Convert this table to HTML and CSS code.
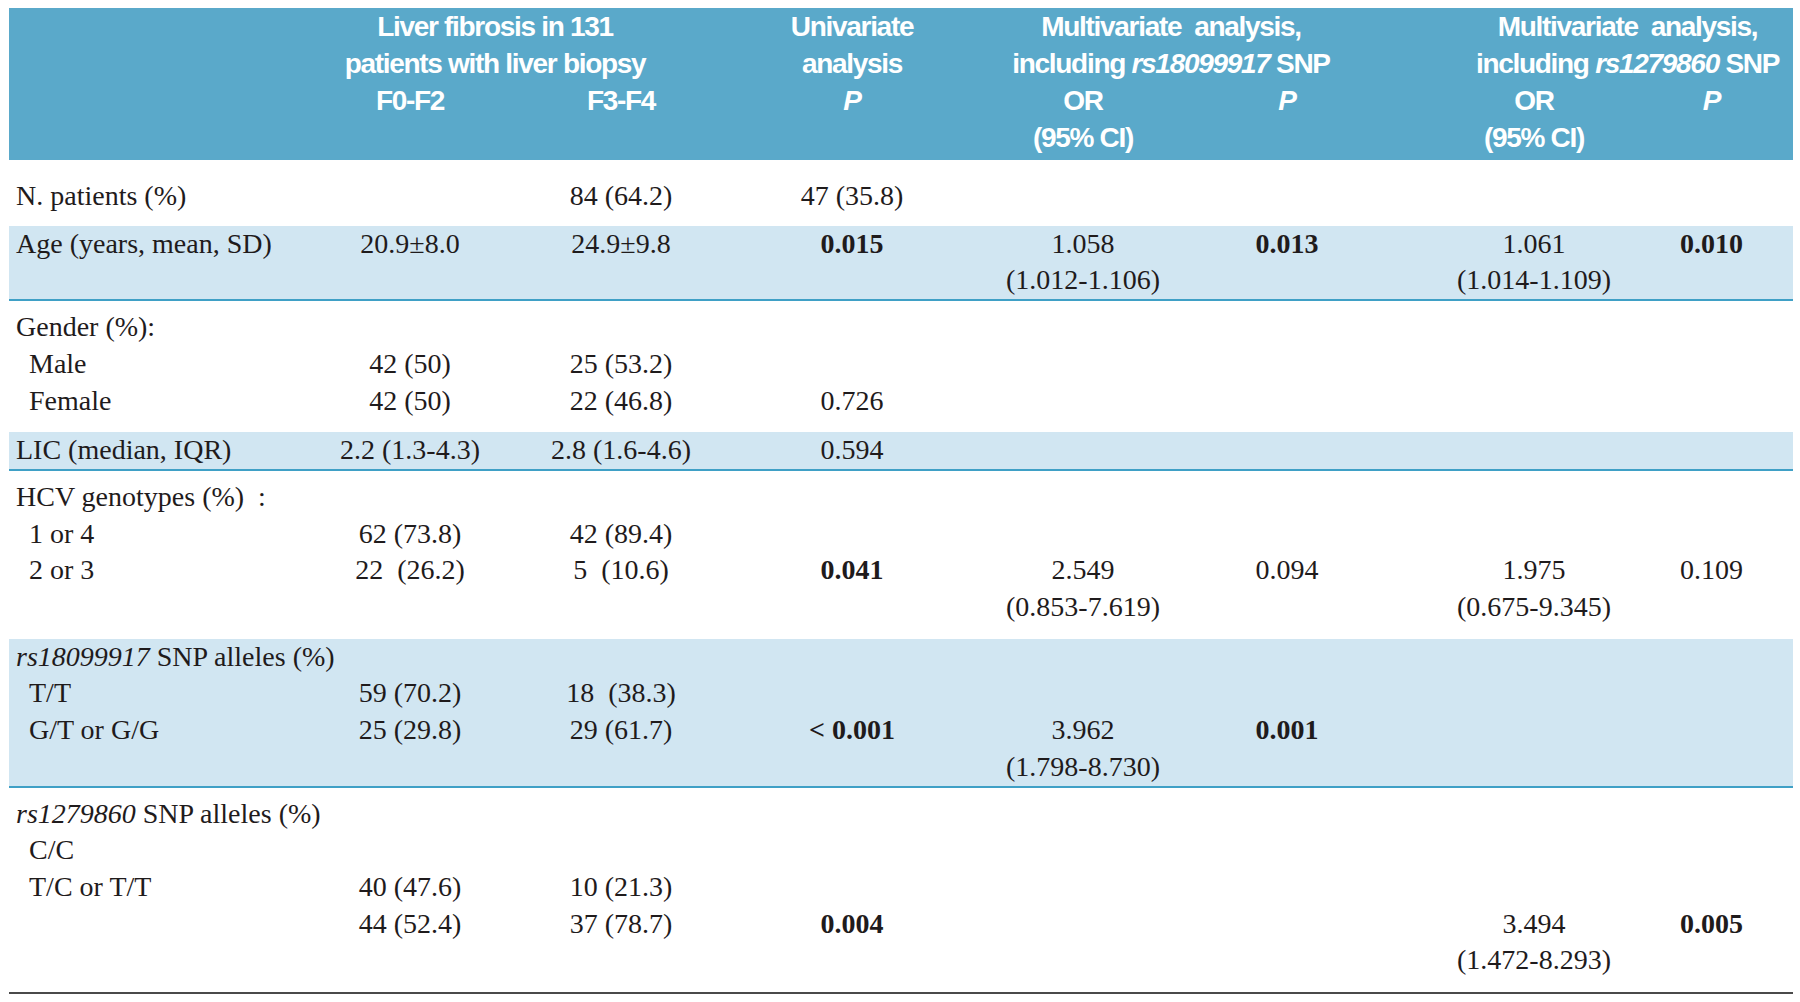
FILE: index.html
```html
<!DOCTYPE html>
<html>
<head>
<meta charset="utf-8">
<link rel="stylesheet" href="styles.css">
</head>
<body>
<div class="tbl">
  <div class="grid head">
    <div class="h g1">Liver fibrosis in 131<br>patients with liver biopsy</div>
    <div class="h univ">Univariate<br>analysis</div>
    <div class="h m1">Multivariate&nbsp; analysis,<br>including <i>rs18099917</i> SNP</div>
    <div class="h m2">Multivariate&nbsp; analysis,<br>including <i>rs1279860</i> SNP</div>
    <div class="h s c2">F0-F2</div>
    <div class="h s c3">F3-F4</div>
    <div class="h s c4"><i>P</i></div>
    <div class="h s c5">OR<br>(95% CI)</div>
    <div class="h s c6"><i>P</i></div>
    <div class="h s c7">OR<br>(95% CI)</div>
    <div class="h s c8"><i>P</i></div>
  </div>

  <div class="grid row first">
    <div class="cell lab">N. patients (%)</div>
    <div class="cell"></div>
    <div class="cell">84 (64.2)</div>
    <div class="cell">47 (35.8)</div>
    <div class="cell"></div>
    <div class="cell"></div>
    <div class="cell"></div>
    <div class="cell last"></div>
  </div>

  <div class="grid row band">
    <div class="cell lab">Age (years, mean, SD)</div>
    <div class="cell">20.9±8.0</div>
    <div class="cell">24.9±9.8</div>
    <div class="cell"><b>0.015</b></div>
    <div class="cell">1.058<br>(1.012-1.106)</div>
    <div class="cell"><b>0.013</b></div>
    <div class="cell">1.061<br>(1.014-1.109)</div>
    <div class="cell last"><b>0.010</b></div>
  </div>

  <div class="grid row plain">
    <div class="cell lab">Gender (%):<br><span class="sub">Male</span><br><span class="sub">Female</span></div>
    <div class="cell">&nbsp;<br>42 (50)<br>42 (50)</div>
    <div class="cell">&nbsp;<br>25 (53.2)<br>22 (46.8)</div>
    <div class="cell">&nbsp;<br>&nbsp;<br>0.726</div>
    <div class="cell"></div>
    <div class="cell"></div>
    <div class="cell"></div>
    <div class="cell last"></div>
  </div>

  <div class="grid row band">
    <div class="cell lab">LIC (median, IQR)</div>
    <div class="cell">2.2 (1.3-4.3)</div>
    <div class="cell">2.8 (1.6-4.6)</div>
    <div class="cell">0.594</div>
    <div class="cell"></div>
    <div class="cell"></div>
    <div class="cell"></div>
    <div class="cell last"></div>
  </div>

  <div class="grid row plain">
    <div class="cell lab">HCV genotypes (%)&nbsp; :<br><span class="sub">1 or 4</span><br><span class="sub">2 or 3</span></div>
    <div class="cell">&nbsp;<br>62 (73.8)<br>22&nbsp; (26.2)</div>
    <div class="cell">&nbsp;<br>42 (89.4)<br>5&nbsp; (10.6)</div>
    <div class="cell">&nbsp;<br>&nbsp;<br><b>0.041</b></div>
    <div class="cell">&nbsp;<br>&nbsp;<br>2.549<br>(0.853-7.619)</div>
    <div class="cell">&nbsp;<br>&nbsp;<br>0.094</div>
    <div class="cell">&nbsp;<br>&nbsp;<br>1.975<br>(0.675-9.345)</div>
    <div class="cell last">&nbsp;<br>&nbsp;<br>0.109</div>
  </div>

  <div class="grid row band">
    <div class="cell lab"><i>rs18099917</i> SNP alleles (%)<br><span class="sub">T/T</span><br><span class="sub">G/T or G/G</span></div>
    <div class="cell">&nbsp;<br>59 (70.2)<br>25 (29.8)</div>
    <div class="cell">&nbsp;<br>18&nbsp; (38.3)<br>29 (61.7)</div>
    <div class="cell">&nbsp;<br>&nbsp;<br><b>&lt; 0.001</b></div>
    <div class="cell">&nbsp;<br>&nbsp;<br>3.962<br>(1.798-8.730)</div>
    <div class="cell">&nbsp;<br>&nbsp;<br><b>0.001</b></div>
    <div class="cell"></div>
    <div class="cell last"></div>
  </div>

  <div class="grid row plain end">
    <div class="cell lab"><i>rs1279860</i> SNP alleles (%)<br><span class="sub">C/C</span><br><span class="sub">T/C or T/T</span></div>
    <div class="cell">&nbsp;<br>&nbsp;<br>40 (47.6)<br>44 (52.4)</div>
    <div class="cell">&nbsp;<br>&nbsp;<br>10 (21.3)<br>37 (78.7)</div>
    <div class="cell">&nbsp;<br>&nbsp;<br>&nbsp;<br><b>0.004</b></div>
    <div class="cell"></div>
    <div class="cell"></div>
    <div class="cell">&nbsp;<br>&nbsp;<br>&nbsp;<br>3.494<br>(1.472-8.293)</div>
    <div class="cell last">&nbsp;<br>&nbsp;<br>&nbsp;<br><b>0.005</b></div>
  </div>
</div>
</body>
</html>
```

FILE: styles.css
```css
* {
  box-sizing: border-box;
}

body {
  margin: 0;
  background: #ffffff;
}

.tbl {
  margin: 8px 0 0 9px;
  width: 1784px;
  font-family: "Liberation Serif", "Times New Roman", serif;
  font-size: 28px;
  color: #1f1b1c;
}

.grid {
  display: grid;
  grid-template-columns: 281px 240px 182px 280px 182px 226px 268px 125px;
}

.head {
  background: #5aa9ca;
  color: #ffffff;
  font-family: "Liberation Sans", Arial, sans-serif;
  font-weight: 700;
  font-size: 28px;
  letter-spacing: -1.3px;
  line-height: 37px;
  padding-bottom: 4px;
}

.head .h {
  text-align: center;
  white-space: nowrap;
  grid-row: 1;
}

.head .s {
  grid-row: 2;
}

.head .g1 {
  grid-column: 2 / 4;
  padding-right: 12px;
}

.head .univ {
  grid-column: 4;
}

.head .m1 {
  grid-column: 5 / 7;
  padding-right: 50px;
}

.head .m2 {
  grid-column: 7 / 9;
  padding-left: 62px;
}

.head .c2 { grid-column: 2; }
.head .c3 { grid-column: 3; }
.head .c4 { grid-column: 4; }
.head .c5 { grid-column: 5; }
.head .c6 { grid-column: 6; }
.head .c7 { grid-column: 7; }
.head .c8 { grid-column: 8; padding-right: 38px; }

.row {
  line-height: 36.7px;
}

.cell {
  text-align: center;
  white-space: nowrap;
}

.cell.lab {
  text-align: left;
  padding-left: 7px;
}

.cell.last {
  padding-right: 38px;
}

.sub {
  display: inline-block;
  padding-left: 13px;
}

.row b {
  font-weight: 700;
}

.first {
  padding: 18px 0 11px;
}

.band {
  background: #d1e6f2;
  border-bottom: 2px solid #3fa0c6;
}

.plain {
  padding: 8px 0 13px;
}

.end {
  padding-bottom: 13px;
  border-bottom: 2px solid #4a4a4a;
}
```
